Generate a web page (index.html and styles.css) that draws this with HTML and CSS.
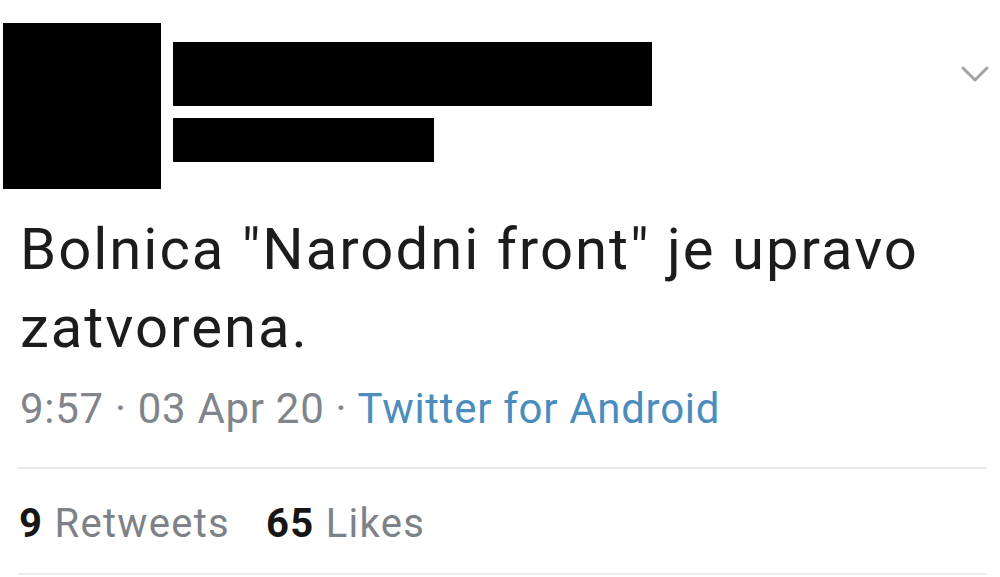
FILE: index.html
```html
<!DOCTYPE html>
<html lang="sr">
<head>
  <meta charset="UTF-8" />
  <meta name="viewport" content="width=device-width, initial-scale=1.0" />
  <title>Tweet</title>
  <link rel="stylesheet" href="styles.css">
</head>
<body>
  <div class="tweet">
    <div class="tweet-header">
      <div class="avatar"></div>
      <div class="author">
        <div class="name-bar"></div>
        <div class="handle-bar"></div>
      </div>
      <svg class="chevron" width="28" height="18" viewBox="0 0 28 18">
        <polyline points="2,2 14,14 26,2" fill="none" stroke="#a3a3a3" stroke-width="3" stroke-linecap="round" stroke-linejoin="round"/>
      </svg>
    </div>
    <div class="tweet-text">Bolnica "Narodni front" je upravo zatvorena.</div>
    <div class="tweet-meta">9:57 · 03 Apr 20 · <span class="source">Twitter for Android</span></div>
    <div class="tweet-stats">
      <span><b>9</b> Retweets</span>
      <span><b>65</b> Likes</span>
    </div>
  </div>
</body>
</html>
```

FILE: styles.css
```css
html, body {
  margin: 0;
  background: #fff;
}
body {
  font-family: Roboto, "Noto Sans", sans-serif;
  color: #1b1b1b;
  overflow: hidden;
}
.tweet {
  width: 1000px;
}
.tweet-header {
  position: relative;
  display: flex;
  padding: 23px 0 0 3px;
}
.avatar {
  width: 158px;
  height: 166px;
  background: #000;
}
.author {
  margin-left: 12px;
  padding-top: 19px;
}
.name-bar {
  width: 479px;
  height: 64px;
  background: #000;
}
.handle-bar {
  width: 261px;
  height: 44px;
  margin-top: 12px;
  background: #000;
}
.chevron {
  position: absolute;
  top: 66px;
  left: 961px;
}
.tweet-text {
  margin-top: 21px;
  padding-left: 20px;
  width: 960px;
  font-size: 58px;
  line-height: 78px;
  letter-spacing: 2px;
  color: #1c1c1c;
}
.tweet-meta {
  margin-top: 18px;
  padding-left: 20px;
  font-size: 42px;
  line-height: 50px;
  letter-spacing: 0.7px;
  color: #7f858a;
}
.source {
  color: #4a8dbd;
}
.tweet-stats {
  margin: 33px 13px 0 18px;
  border-top: 2px solid #e9e9e9;
  border-bottom: 2px solid #ececec;
  padding: 31px 0 25px 1px;
  display: flex;
  gap: 36px;
  font-size: 40px;
  line-height: 48px;
  letter-spacing: 1.3px;
  color: #7c8288;
}
.tweet-stats b {
  color: #161616;
  font-weight: 700;
}
```
